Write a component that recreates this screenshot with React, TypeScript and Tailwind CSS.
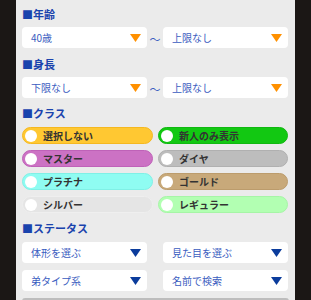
import React from "react";

const font = { fontFamily: '"Noto Sans CJK JP", "Noto Sans", sans-serif' };

function Tri({ color }: { color: string }) {
  return (
    <svg width="11" height="8" viewBox="0 0 11 8" className="shrink-0">
      <polygon points="0,0 11,0 5.5,8" fill={color} />
    </svg>
  );
}

function Select({ label, tri }: { label: string; tri: string }) {
  return (
    <div className="flex h-[21px] w-[125px] items-center justify-between rounded-[4px] bg-white pl-[9px] pr-[6px]">
      <span className="text-[10px] leading-none text-[#3a5cc0]">{label}</span>
      <Tri color={tri} />
    </div>
  );
}

function Header({ children, className }: { children: React.ReactNode; className?: string }) {
  return (
    <div className={"h-[14px] text-[11px] font-bold leading-[14px] text-[#1a43ad] " + (className ?? "")}>
      ■{children}
    </div>
  );
}

function Pill({ label, bg, border, w }: { label: string; bg: string; border: string; w: string }) {
  return (
    <div className={`flex h-[17px] items-center rounded-full border-[1.5px] pl-[2px] ${bg} ${border} ${w}`}>
      <div className="h-[12px] w-[12px] shrink-0 rounded-full bg-white" />
      <span className="ml-[6px] text-[10px] font-bold leading-none text-[#333333]">{label}</span>
    </div>
  );
}

export default function App() {
  return (
    <div className="flex h-[300px] w-[311px] overflow-hidden" style={font}>
      <div className="w-[16px] shrink-0 bg-[#1b1715]" />
      <div className="w-[279px] shrink-0 bg-[#ebebeb] pl-[6px] pr-[7px] pt-[7px]">
        <Header>年齢</Header>
        <div className="mt-[6px] flex items-center">
          <Select label="40歳" tri="#ff9000" />
          <div className="flex w-[16px] justify-center pt-[3px] text-[11px] leading-none text-[#3a5cc0]">～</div>
          <Select label="上限なし" tri="#ff9000" />
        </div>
        <Header className="mt-[9px]">身長</Header>
        <div className="mt-[6px] flex items-center">
          <Select label="下限なし" tri="#ff9000" />
          <div className="flex w-[16px] justify-center pt-[3px] text-[11px] leading-none text-[#3a5cc0]">～</div>
          <Select label="上限なし" tri="#ff9000" />
        </div>
        <Header className="mt-[8px]">クラス</Header>
        <div className="mt-[7px] grid grid-cols-[131px_130px] gap-x-[5px] gap-y-[6px]">
          <Pill label="選択しない" bg="bg-[#ffc832]" border="border-[#f5b820]" w="w-[131px]" />
          <Pill label="新人のみ表示" bg="bg-[#12c812]" border="border-[#10b810]" w="w-[130px]" />
          <Pill label="マスター" bg="bg-[#cc72c4]" border="border-[#bf62b8]" w="w-[131px]" />
          <Pill label="ダイヤ" bg="bg-[#bdbdbd]" border="border-[#b0b0b0]" w="w-[130px]" />
          <Pill label="プラチナ" bg="bg-[#8ffcf2]" border="border-[#80f0e6]" w="w-[131px]" />
          <Pill label="ゴールド" bg="bg-[#c8a97a]" border="border-[#bc9c6c]" w="w-[130px]" />
          <Pill label="シルバー" bg="bg-[#e5e5e5]" border="border-[#efefef]" w="w-[131px]" />
          <Pill label="レギュラー" bg="bg-[#b2ffb2]" border="border-[#a6f5a6]" w="w-[130px]" />
        </div>
        <Header className="mt-[8px]">ステータス</Header>
        <div className="mt-[7px] flex gap-x-[16px]">
          <Select label="体形を選ぶ" tri="#0b3c9c" />
          <Select label="見た目を選ぶ" tri="#0b3c9c" />
        </div>
        <div className="mt-[7px] flex gap-x-[16px]">
          <Select label="弟タイプ系" tri="#0b3c9c" />
          <Select label="名前で検索" tri="#0b3c9c" />
        </div>
        <div className="mt-[7px] h-[6px] w-[267px] rounded-t-[3px] bg-[#bdbdbd]" />
      </div>
      <div className="w-[16px] shrink-0 bg-[#1b1715]" />
    </div>
  );
}
